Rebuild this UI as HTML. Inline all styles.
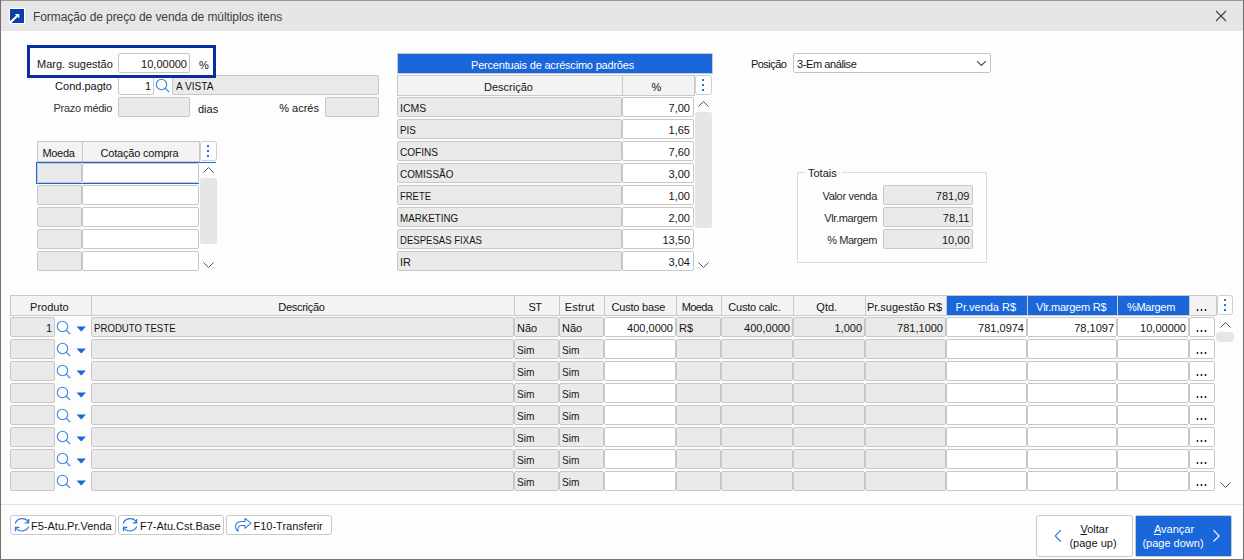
<!DOCTYPE html><html><head><meta charset="utf-8"><style>
html,body{margin:0;padding:0;}
body{width:1244px;height:560px;overflow:hidden;position:relative;background:#fdfdfd;font-family:"Liberation Sans", sans-serif;}
body div, body svg{position:absolute;box-sizing:border-box;white-space:pre;}
</style></head><body>
<div style="left:0px;top:0px;width:1244px;height:560px;background:#fdfdfd;"></div>
<div style="left:0px;top:0px;width:1244px;height:31px;background:#e6e6e6;"></div>
<div style="left:0px;top:0px;width:1244px;height:1px;background:#9a9a9a;"></div>
<div style="left:0px;top:0px;width:1px;height:560px;background:#6f6f6f;"></div>
<div style="left:1243px;top:0px;width:1px;height:560px;background:#6f6f6f;"></div>
<div style="left:0px;top:559px;width:1244px;height:1px;background:#7a7a7a;"></div>
<div style="left:9px;top:8px;width:16px;height:16px;background:#ffffff;"></div>
<div style="left:10px;top:9px;width:14px;height:14px;background:#0a3ea8;"></div>
<svg style="left:10px;top:9px" width="14" height="14" viewBox="0 0 14 14"><path d="M0 13.8 L7.6 6.4" stroke="#fff" stroke-width="2.1" fill="none"/><path d="M4.8 5 L9.3 5 L9.3 9.5 Z" fill="#fff"/></svg>
<div style="left:33px;top:10.7px;font-size:12px;line-height:12px;color:#404040;letter-spacing:-0.08px;">Formação de preço de venda de múltiplos itens</div>
<svg style="left:1215px;top:10px" width="12" height="12" viewBox="0 0 12 12"><path d="M1 1 L11 11 M11 1 L1 11" stroke="#404040" stroke-width="1.1" fill="none"/></svg>
<div style="left:37px;top:59.0px;font-size:11px;line-height:11px;color:#141414;">Marg. sugestão</div>
<div style="left:118px;top:53px;width:72px;height:20px;background:#ffffff;border:1px solid #c7c7c7;border-radius:2px;"></div>
<div style="left:-213px;width:400px;text-align:right;top:59.0px;font-size:11px;line-height:11px;color:#141414;">10,00000</div>
<div style="left:199px;top:60.0px;font-size:11px;line-height:11px;color:#141414;">%</div>
<div style="left:-288px;width:400px;text-align:right;top:81.0px;font-size:11px;line-height:11px;color:#141414;">Cond.pagto</div>
<div style="left:118px;top:75px;width:36px;height:20px;background:#ffffff;border:1px solid #c7c7c7;border-radius:2px;"></div>
<div style="left:-249px;width:400px;text-align:right;top:81.0px;font-size:11px;line-height:11px;color:#141414;">1</div>
<svg style="left:155px;top:78px" width="16" height="16" viewBox="0 0 16 16"><circle cx="6.5" cy="6.5" r="5.2" stroke="#3b82e6" stroke-width="1.1" fill="none"/><path d="M10.2 10.2 L14.2 14.2" stroke="#3b82e6" stroke-width="1.2"/></svg>
<div style="left:172px;top:75px;width:207px;height:20px;background:#eaeaea;border:1px solid #c7c7c7;border-radius:2px;"></div>
<div style="left:176px;top:81.0px;font-size:11px;line-height:11px;color:#141414;transform:scaleX(0.92);transform-origin:0 0;">A VISTA</div>
<div style="left:27px;top:45px;width:189px;height:33px;background:transparent;border:3px solid #0a2f9c;"></div>
<div style="left:-288px;width:400px;text-align:right;top:103.0px;font-size:11px;line-height:11px;color:#333;letter-spacing:-0.3px;">Prazo médio</div>
<div style="left:118px;top:97px;width:72px;height:20px;background:#eaeaea;border:1px solid #c7c7c7;border-radius:2px;"></div>
<div style="left:198px;top:104.0px;font-size:11px;line-height:11px;color:#141414;">dias</div>
<div style="left:-81px;width:400px;text-align:right;top:103.0px;font-size:11px;line-height:11px;color:#141414;">% acrés</div>
<div style="left:325px;top:97px;width:54px;height:20px;background:#eaeaea;border:1px solid #c7c7c7;border-radius:2px;"></div>
<div style="left:37px;top:141px;width:163px;height:21px;background:#f3f3f3;border:1px solid #c9c9c9;"></div>
<div style="left:82px;top:141px;width:1px;height:21px;background:#c9c9c9;"></div>
<div style="left:-141.5px;width:400px;text-align:center;top:148.0px;font-size:11px;line-height:11px;color:#141414;letter-spacing:-0.3px;">Moeda</div>
<div style="left:-60.5px;width:400px;text-align:center;top:148.0px;font-size:11px;line-height:11px;color:#141414;letter-spacing:-0.2px;">Cotação compra</div>
<div style="left:200px;top:141px;width:17px;height:20px;background:#ffffff;border:1px solid #cfcfcf;border-radius:3px;"></div>
<svg style="left:200px;top:141px" width="17" height="20" viewBox="0 0 17 20"><rect x="7" y="4" width="2" height="2" fill="#2a72e0"/><rect x="7" y="9" width="2" height="2" fill="#2a72e0"/><rect x="7" y="14" width="2" height="2" fill="#2a72e0"/></svg>
<div style="left:37px;top:163px;width:45px;height:20px;background:#eaeaea;border:1px solid #c7c7c7;border-radius:2px;"></div>
<div style="left:82px;top:163px;width:117px;height:20px;background:#ffffff;border:1px solid #c7c7c7;border-radius:2px;"></div>
<div style="left:37px;top:185px;width:45px;height:20px;background:#eaeaea;border:1px solid #c7c7c7;border-radius:2px;"></div>
<div style="left:82px;top:185px;width:117px;height:20px;background:#ffffff;border:1px solid #c7c7c7;border-radius:2px;"></div>
<div style="left:37px;top:207px;width:45px;height:20px;background:#eaeaea;border:1px solid #c7c7c7;border-radius:2px;"></div>
<div style="left:82px;top:207px;width:117px;height:20px;background:#ffffff;border:1px solid #c7c7c7;border-radius:2px;"></div>
<div style="left:37px;top:229px;width:45px;height:20px;background:#eaeaea;border:1px solid #c7c7c7;border-radius:2px;"></div>
<div style="left:82px;top:229px;width:117px;height:20px;background:#ffffff;border:1px solid #c7c7c7;border-radius:2px;"></div>
<div style="left:37px;top:251px;width:45px;height:20px;background:#eaeaea;border:1px solid #c7c7c7;border-radius:2px;"></div>
<div style="left:82px;top:251px;width:117px;height:20px;background:#ffffff;border:1px solid #c7c7c7;border-radius:2px;"></div>
<div style="left:36px;top:162px;width:163px;height:22px;background:transparent;border:1px solid #1a66e6;border-right:none;"></div>
<div style="left:199px;top:162px;width:17px;height:1px;background:#1a66e6;"></div>
<svg style="left:200px;top:164px" width="17" height="12" viewBox="0 0 17 12"><path d="M3.5 8.5 L8.5 3.5 L13.5 8.5" stroke="#555" stroke-width="1" fill="none"/></svg>
<div style="left:200px;top:178px;width:17px;height:66px;background:#e6e6e6;border-radius:3px;"></div>
<svg style="left:200px;top:259px" width="17" height="12" viewBox="0 0 17 12"><path d="M3.5 3.5 L8.5 8.5 L13.5 3.5" stroke="#555" stroke-width="1" fill="none"/></svg>
<div style="left:397px;top:53px;width:316px;height:21px;background:#1a66db;border:1px solid #c5cbd3;"></div>
<div style="left:352.5px;width:400px;text-align:center;top:60.0px;font-size:11px;line-height:11px;color:#ffffff;letter-spacing:-0.2px;">Percentuais de acréscimo padrões</div>
<div style="left:397px;top:75px;width:298px;height:21px;background:#f3f3f3;border:1px solid #c9c9c9;"></div>
<div style="left:622px;top:75px;width:1px;height:21px;background:#c9c9c9;"></div>
<div style="left:308.5px;width:400px;text-align:center;top:82.0px;font-size:11px;line-height:11px;color:#141414;">Descrição</div>
<div style="left:456.5px;width:400px;text-align:center;top:82.0px;font-size:11px;line-height:11px;color:#141414;">%</div>
<div style="left:695px;top:75px;width:17px;height:20px;background:#ffffff;border:1px solid #cfcfcf;border-radius:3px;"></div>
<svg style="left:695px;top:75px" width="17" height="20" viewBox="0 0 17 20"><rect x="7" y="4" width="2" height="2" fill="#2a72e0"/><rect x="7" y="9" width="2" height="2" fill="#2a72e0"/><rect x="7" y="14" width="2" height="2" fill="#2a72e0"/></svg>
<div style="left:397px;top:97px;width:225px;height:20px;background:#eaeaea;border:1px solid #c7c7c7;border-radius:2px;"></div>
<div style="left:622px;top:97px;width:72px;height:20px;background:#ffffff;border:1px solid #c7c7c7;border-radius:2px;"></div>
<div style="left:400px;top:103.0px;font-size:11px;line-height:11px;color:#141414;transform:scaleX(0.95);transform-origin:0 0;">ICMS</div>
<div style="left:290px;width:400px;text-align:right;top:103.0px;font-size:11px;line-height:11px;color:#141414;">7,00</div>
<div style="left:397px;top:119px;width:225px;height:20px;background:#eaeaea;border:1px solid #c7c7c7;border-radius:2px;"></div>
<div style="left:622px;top:119px;width:72px;height:20px;background:#ffffff;border:1px solid #c7c7c7;border-radius:2px;"></div>
<div style="left:400px;top:125.0px;font-size:11px;line-height:11px;color:#141414;transform:scaleX(0.89);transform-origin:0 0;">PIS</div>
<div style="left:290px;width:400px;text-align:right;top:125.0px;font-size:11px;line-height:11px;color:#141414;">1,65</div>
<div style="left:397px;top:141px;width:225px;height:20px;background:#eaeaea;border:1px solid #c7c7c7;border-radius:2px;"></div>
<div style="left:622px;top:141px;width:72px;height:20px;background:#ffffff;border:1px solid #c7c7c7;border-radius:2px;"></div>
<div style="left:400px;top:147.0px;font-size:11px;line-height:11px;color:#141414;transform:scaleX(0.915);transform-origin:0 0;">COFINS</div>
<div style="left:290px;width:400px;text-align:right;top:147.0px;font-size:11px;line-height:11px;color:#141414;">7,60</div>
<div style="left:397px;top:163px;width:225px;height:20px;background:#eaeaea;border:1px solid #c7c7c7;border-radius:2px;"></div>
<div style="left:622px;top:163px;width:72px;height:20px;background:#ffffff;border:1px solid #c7c7c7;border-radius:2px;"></div>
<div style="left:400px;top:169.0px;font-size:11px;line-height:11px;color:#141414;transform:scaleX(0.9);transform-origin:0 0;">COMISSÃO</div>
<div style="left:290px;width:400px;text-align:right;top:169.0px;font-size:11px;line-height:11px;color:#141414;">3,00</div>
<div style="left:397px;top:185px;width:225px;height:20px;background:#eaeaea;border:1px solid #c7c7c7;border-radius:2px;"></div>
<div style="left:622px;top:185px;width:72px;height:20px;background:#ffffff;border:1px solid #c7c7c7;border-radius:2px;"></div>
<div style="left:400px;top:191.0px;font-size:11px;line-height:11px;color:#141414;transform:scaleX(0.86);transform-origin:0 0;">FRETE</div>
<div style="left:290px;width:400px;text-align:right;top:191.0px;font-size:11px;line-height:11px;color:#141414;">1,00</div>
<div style="left:397px;top:207px;width:225px;height:20px;background:#eaeaea;border:1px solid #c7c7c7;border-radius:2px;"></div>
<div style="left:622px;top:207px;width:72px;height:20px;background:#ffffff;border:1px solid #c7c7c7;border-radius:2px;"></div>
<div style="left:400px;top:213.0px;font-size:11px;line-height:11px;color:#141414;transform:scaleX(0.89);transform-origin:0 0;">MARKETING</div>
<div style="left:290px;width:400px;text-align:right;top:213.0px;font-size:11px;line-height:11px;color:#141414;">2,00</div>
<div style="left:397px;top:229px;width:225px;height:20px;background:#eaeaea;border:1px solid #c7c7c7;border-radius:2px;"></div>
<div style="left:622px;top:229px;width:72px;height:20px;background:#ffffff;border:1px solid #c7c7c7;border-radius:2px;"></div>
<div style="left:400px;top:235.0px;font-size:11px;line-height:11px;color:#141414;transform:scaleX(0.87);transform-origin:0 0;">DESPESAS FIXAS</div>
<div style="left:290px;width:400px;text-align:right;top:235.0px;font-size:11px;line-height:11px;color:#141414;">13,50</div>
<div style="left:397px;top:251px;width:225px;height:20px;background:#eaeaea;border:1px solid #c7c7c7;border-radius:2px;"></div>
<div style="left:622px;top:251px;width:72px;height:20px;background:#ffffff;border:1px solid #c7c7c7;border-radius:2px;"></div>
<div style="left:400px;top:257.0px;font-size:11px;line-height:11px;color:#141414;transform:scaleX(1);transform-origin:0 0;">IR</div>
<div style="left:290px;width:400px;text-align:right;top:257.0px;font-size:11px;line-height:11px;color:#141414;">3,04</div>
<svg style="left:695px;top:98px" width="17" height="12" viewBox="0 0 17 12"><path d="M3.5 8.5 L8.5 3.5 L13.5 8.5" stroke="#555" stroke-width="1" fill="none"/></svg>
<div style="left:695px;top:112px;width:17px;height:116px;background:#e6e6e6;border-radius:3px;"></div>
<svg style="left:695px;top:259px" width="17" height="12" viewBox="0 0 17 12"><path d="M3.5 3.5 L8.5 8.5 L13.5 3.5" stroke="#555" stroke-width="1" fill="none"/></svg>
<div style="left:751px;top:59.0px;font-size:11px;line-height:11px;color:#141414;letter-spacing:-0.55px;">Posição</div>
<div style="left:793px;top:53px;width:198px;height:20px;background:#ffffff;border:1px solid #c4c4c4;border-radius:2px;"></div>
<div style="left:797px;top:59.0px;font-size:11px;line-height:11px;color:#141414;letter-spacing:-0.4px;">3-Em análise</div>
<svg style="left:970px;top:55px" width="20" height="15" viewBox="0 0 20 15"><path d="M7 6.1 L11.4 10.5 L15.8 6.1" stroke="#444" stroke-width="1.1" fill="none"/></svg>
<div style="left:797px;top:172px;width:190px;height:91px;background:transparent;border:1px solid #dcdcdc;"></div>
<div style="left:805px;top:166px;width:37px;height:12px;background:#fdfdfd;"></div>
<div style="left:808px;top:168.0px;font-size:11px;line-height:11px;color:#141414;">Totais</div>
<div style="left:477px;width:400px;text-align:right;top:191.0px;font-size:11px;line-height:11px;color:#2a2a2a;letter-spacing:-0.3px;">Valor venda</div>
<div style="left:883px;top:185px;width:90px;height:20px;background:#eaeaea;border:1px solid #c7c7c7;border-radius:2px;"></div>
<div style="left:569.5px;width:400px;text-align:right;top:191.0px;font-size:11px;line-height:11px;color:#141414;">781,09</div>
<div style="left:477px;width:400px;text-align:right;top:213.0px;font-size:11px;line-height:11px;color:#2a2a2a;letter-spacing:-0.35px;">Vlr.margem</div>
<div style="left:883px;top:207px;width:90px;height:20px;background:#eaeaea;border:1px solid #c7c7c7;border-radius:2px;"></div>
<div style="left:569.5px;width:400px;text-align:right;top:213.0px;font-size:11px;line-height:11px;color:#141414;">78,11</div>
<div style="left:477px;width:400px;text-align:right;top:235.0px;font-size:11px;line-height:11px;color:#2a2a2a;letter-spacing:-0.42px;">% Margem</div>
<div style="left:883px;top:229px;width:90px;height:20px;background:#eaeaea;border:1px solid #c7c7c7;border-radius:2px;"></div>
<div style="left:569.5px;width:400px;text-align:right;top:235.0px;font-size:11px;line-height:11px;color:#141414;">10,00</div>
<div style="left:10px;top:295px;width:1207px;height:21px;background:#f3f3f3;border:1px solid #c9c9c9;"></div>
<div style="left:947px;top:296px;width:242px;height:19px;background:#1a66db;"></div>
<div style="left:91px;top:295px;width:1px;height:21px;background:#c9c9c9;"></div>
<div style="left:514px;top:295px;width:1px;height:21px;background:#c9c9c9;"></div>
<div style="left:559px;top:295px;width:1px;height:21px;background:#c9c9c9;"></div>
<div style="left:604px;top:295px;width:1px;height:21px;background:#c9c9c9;"></div>
<div style="left:676px;top:295px;width:1px;height:21px;background:#c9c9c9;"></div>
<div style="left:721px;top:295px;width:1px;height:21px;background:#c9c9c9;"></div>
<div style="left:793px;top:295px;width:1px;height:21px;background:#c9c9c9;"></div>
<div style="left:865px;top:295px;width:1px;height:21px;background:#c9c9c9;"></div>
<div style="left:946px;top:295px;width:1px;height:21px;background:#c9c9c9;"></div>
<div style="left:1027px;top:295px;width:1px;height:21px;background:#cfcbc5;"></div>
<div style="left:1117px;top:295px;width:1px;height:21px;background:#cfcbc5;"></div>
<div style="left:1189px;top:295px;width:1px;height:21px;background:#c9c9c9;"></div>
<div style="left:-150.7px;width:400px;text-align:center;top:302.0px;font-size:11px;line-height:11px;color:#141414;">Produto</div>
<div style="left:101.44999999999999px;width:400px;text-align:center;top:302.0px;font-size:11px;line-height:11px;color:#141414;letter-spacing:-0.3px;">Descrição</div>
<div style="left:335px;width:400px;text-align:center;top:302.0px;font-size:11px;line-height:11px;color:#141414;letter-spacing:-0.5px;">ST</div>
<div style="left:379.6px;width:400px;text-align:center;top:302.0px;font-size:11px;line-height:11px;color:#141414;letter-spacing:0.15px;">Estrut</div>
<div style="left:438.35px;width:400px;text-align:center;top:302.0px;font-size:11px;line-height:11px;color:#141414;letter-spacing:-0.2px;">Custo base</div>
<div style="left:497.1px;width:400px;text-align:center;top:302.0px;font-size:11px;line-height:11px;color:#141414;letter-spacing:-0.6px;">Moeda</div>
<div style="left:554.4px;width:400px;text-align:center;top:302.0px;font-size:11px;line-height:11px;color:#141414;letter-spacing:-0.2px;">Custo calc.</div>
<div style="left:626.75px;width:400px;text-align:center;top:302.0px;font-size:11px;line-height:11px;color:#141414;">Qtd.</div>
<div style="left:704.5px;width:400px;text-align:center;top:302.0px;font-size:11px;line-height:11px;color:#141414;">Pr.sugestão R$</div>
<div style="left:785.85px;width:400px;text-align:center;top:302.0px;font-size:11px;line-height:11px;color:#ffffff;">Pr.venda R$</div>
<div style="left:871.2px;width:400px;text-align:center;top:302.0px;font-size:11px;line-height:11px;color:#ffffff;letter-spacing:-0.24px;">Vlr.margem R$</div>
<div style="left:951px;width:400px;text-align:center;top:302.0px;font-size:11px;line-height:11px;color:#ffffff;letter-spacing:-0.29px;">%Margem</div>
<div style="left:1196px;top:309px;width:3px;height:2px;background:#c4c4c4;"></div>
<div style="left:1197px;top:309px;width:1px;height:2px;background:#1a1a3a;"></div>
<div style="left:1200px;top:309px;width:3px;height:2px;background:#c4c4c4;"></div>
<div style="left:1201px;top:309px;width:1px;height:2px;background:#1a1a3a;"></div>
<div style="left:1204px;top:309px;width:3px;height:2px;background:#c4c4c4;"></div>
<div style="left:1205px;top:309px;width:1px;height:2px;background:#1a1a3a;"></div>
<div style="left:1217px;top:295px;width:16px;height:20px;background:#ffffff;border:1px solid #cfcfcf;border-radius:3px;"></div>
<svg style="left:1217px;top:295px" width="16" height="20" viewBox="0 0 16 20"><rect x="7" y="4" width="2" height="2" fill="#2a72e0"/><rect x="7" y="9" width="2" height="2" fill="#2a72e0"/><rect x="7" y="14" width="2" height="2" fill="#2a72e0"/></svg>
<div style="left:10px;top:317px;width:45px;height:20px;background:#eaeaea;border:1px solid #c7c7c7;border-radius:2px;"></div>
<svg style="left:56px;top:320px" width="16" height="16" viewBox="0 0 16 16"><circle cx="6.5" cy="6.5" r="5.2" stroke="#3b82e6" stroke-width="1.1" fill="none"/><path d="M10.2 10.2 L14.2 14.2" stroke="#3b82e6" stroke-width="1.2"/></svg>
<svg style="left:76px;top:326px" width="11" height="6" viewBox="0 0 11 6"><path d="M0.5 0.5 H10 L5.25 5.5 Z" fill="#1a66db"/></svg>
<div style="left:91px;top:317px;width:423px;height:20px;background:#eaeaea;border:1px solid #c7c7c7;border-radius:2px;"></div>
<div style="left:514px;top:317px;width:45px;height:20px;background:#eaeaea;border:1px solid #c7c7c7;border-radius:2px;"></div>
<div style="left:559px;top:317px;width:45px;height:20px;background:#eaeaea;border:1px solid #c7c7c7;border-radius:2px;"></div>
<div style="left:604px;top:317px;width:72px;height:20px;background:#ffffff;border:1px solid #c7c7c7;border-radius:2px;"></div>
<div style="left:676px;top:317px;width:45px;height:20px;background:#eaeaea;border:1px solid #c7c7c7;border-radius:2px;"></div>
<div style="left:721px;top:317px;width:72px;height:20px;background:#eaeaea;border:1px solid #c7c7c7;border-radius:2px;"></div>
<div style="left:793px;top:317px;width:72px;height:20px;background:#eaeaea;border:1px solid #c7c7c7;border-radius:2px;"></div>
<div style="left:865px;top:317px;width:81px;height:20px;background:#eaeaea;border:1px solid #c7c7c7;border-radius:2px;"></div>
<div style="left:946px;top:317px;width:81px;height:20px;background:#ffffff;border:1px solid #c7c7c7;border-radius:2px;"></div>
<div style="left:1027px;top:317px;width:90px;height:20px;background:#ffffff;border:1px solid #c7c7c7;border-radius:2px;"></div>
<div style="left:1117px;top:317px;width:72px;height:20px;background:#ffffff;border:1px solid #c7c7c7;border-radius:2px;"></div>
<div style="left:1189px;top:317px;width:26px;height:20px;background:#ffffff;border:1px solid #c7c7c7;border-radius:2px;"></div>
<div style="left:517px;top:323.0px;font-size:11px;line-height:11px;color:#141414;">Não</div>
<div style="left:562px;top:323.0px;font-size:11px;line-height:11px;color:#141414;">Não</div>
<div style="left:1196px;top:330px;width:3px;height:2px;background:#c4c4c4;"></div>
<div style="left:1197px;top:330px;width:1px;height:2px;background:#1a1a3a;"></div>
<div style="left:1200px;top:330px;width:3px;height:2px;background:#c4c4c4;"></div>
<div style="left:1201px;top:330px;width:1px;height:2px;background:#1a1a3a;"></div>
<div style="left:1204px;top:330px;width:3px;height:2px;background:#c4c4c4;"></div>
<div style="left:1205px;top:330px;width:1px;height:2px;background:#1a1a3a;"></div>
<div style="left:-348px;width:400px;text-align:right;top:323.0px;font-size:11px;line-height:11px;color:#141414;">1</div>
<div style="left:94px;top:323.0px;font-size:11px;line-height:11px;color:#141414;transform:scaleX(0.876);transform-origin:0 0;">PRODUTO TESTE</div>
<div style="left:273px;width:400px;text-align:right;top:323.0px;font-size:11px;line-height:11px;color:#141414;">400,0000</div>
<div style="left:679px;top:323.0px;font-size:11px;line-height:11px;color:#141414;">R$</div>
<div style="left:390px;width:400px;text-align:right;top:323.0px;font-size:11px;line-height:11px;color:#141414;">400,0000</div>
<div style="left:462px;width:400px;text-align:right;top:323.0px;font-size:11px;line-height:11px;color:#141414;">1,000</div>
<div style="left:543px;width:400px;text-align:right;top:323.0px;font-size:11px;line-height:11px;color:#141414;">781,1000</div>
<div style="left:624px;width:400px;text-align:right;top:323.0px;font-size:11px;line-height:11px;color:#141414;">781,0974</div>
<div style="left:714px;width:400px;text-align:right;top:323.0px;font-size:11px;line-height:11px;color:#141414;">78,1097</div>
<div style="left:786px;width:400px;text-align:right;top:323.0px;font-size:11px;line-height:11px;color:#141414;">10,00000</div>
<div style="left:10px;top:339px;width:45px;height:20px;background:#eaeaea;border:1px solid #c7c7c7;border-radius:2px;"></div>
<svg style="left:56px;top:342px" width="16" height="16" viewBox="0 0 16 16"><circle cx="6.5" cy="6.5" r="5.2" stroke="#3b82e6" stroke-width="1.1" fill="none"/><path d="M10.2 10.2 L14.2 14.2" stroke="#3b82e6" stroke-width="1.2"/></svg>
<svg style="left:76px;top:348px" width="11" height="6" viewBox="0 0 11 6"><path d="M0.5 0.5 H10 L5.25 5.5 Z" fill="#1a66db"/></svg>
<div style="left:91px;top:339px;width:423px;height:20px;background:#eaeaea;border:1px solid #c7c7c7;border-radius:2px;"></div>
<div style="left:514px;top:339px;width:45px;height:20px;background:#eaeaea;border:1px solid #c7c7c7;border-radius:2px;"></div>
<div style="left:559px;top:339px;width:45px;height:20px;background:#eaeaea;border:1px solid #c7c7c7;border-radius:2px;"></div>
<div style="left:604px;top:339px;width:72px;height:20px;background:#ffffff;border:1px solid #c7c7c7;border-radius:2px;"></div>
<div style="left:676px;top:339px;width:45px;height:20px;background:#eaeaea;border:1px solid #c7c7c7;border-radius:2px;"></div>
<div style="left:721px;top:339px;width:72px;height:20px;background:#eaeaea;border:1px solid #c7c7c7;border-radius:2px;"></div>
<div style="left:793px;top:339px;width:72px;height:20px;background:#eaeaea;border:1px solid #c7c7c7;border-radius:2px;"></div>
<div style="left:865px;top:339px;width:81px;height:20px;background:#eaeaea;border:1px solid #c7c7c7;border-radius:2px;"></div>
<div style="left:946px;top:339px;width:81px;height:20px;background:#ffffff;border:1px solid #c7c7c7;border-radius:2px;"></div>
<div style="left:1027px;top:339px;width:90px;height:20px;background:#ffffff;border:1px solid #c7c7c7;border-radius:2px;"></div>
<div style="left:1117px;top:339px;width:72px;height:20px;background:#ffffff;border:1px solid #c7c7c7;border-radius:2px;"></div>
<div style="left:1189px;top:339px;width:26px;height:20px;background:#ffffff;border:1px solid #c7c7c7;border-radius:2px;"></div>
<div style="left:517px;top:345.0px;font-size:11px;line-height:11px;color:#141414;transform:scaleX(0.92);transform-origin:0 0;">Sim</div>
<div style="left:562px;top:345.0px;font-size:11px;line-height:11px;color:#141414;transform:scaleX(0.92);transform-origin:0 0;">Sim</div>
<div style="left:1196px;top:352px;width:3px;height:2px;background:#c4c4c4;"></div>
<div style="left:1197px;top:352px;width:1px;height:2px;background:#1a1a3a;"></div>
<div style="left:1200px;top:352px;width:3px;height:2px;background:#c4c4c4;"></div>
<div style="left:1201px;top:352px;width:1px;height:2px;background:#1a1a3a;"></div>
<div style="left:1204px;top:352px;width:3px;height:2px;background:#c4c4c4;"></div>
<div style="left:1205px;top:352px;width:1px;height:2px;background:#1a1a3a;"></div>
<div style="left:10px;top:361px;width:45px;height:20px;background:#eaeaea;border:1px solid #c7c7c7;border-radius:2px;"></div>
<svg style="left:56px;top:364px" width="16" height="16" viewBox="0 0 16 16"><circle cx="6.5" cy="6.5" r="5.2" stroke="#3b82e6" stroke-width="1.1" fill="none"/><path d="M10.2 10.2 L14.2 14.2" stroke="#3b82e6" stroke-width="1.2"/></svg>
<svg style="left:76px;top:370px" width="11" height="6" viewBox="0 0 11 6"><path d="M0.5 0.5 H10 L5.25 5.5 Z" fill="#1a66db"/></svg>
<div style="left:91px;top:361px;width:423px;height:20px;background:#eaeaea;border:1px solid #c7c7c7;border-radius:2px;"></div>
<div style="left:514px;top:361px;width:45px;height:20px;background:#eaeaea;border:1px solid #c7c7c7;border-radius:2px;"></div>
<div style="left:559px;top:361px;width:45px;height:20px;background:#eaeaea;border:1px solid #c7c7c7;border-radius:2px;"></div>
<div style="left:604px;top:361px;width:72px;height:20px;background:#ffffff;border:1px solid #c7c7c7;border-radius:2px;"></div>
<div style="left:676px;top:361px;width:45px;height:20px;background:#eaeaea;border:1px solid #c7c7c7;border-radius:2px;"></div>
<div style="left:721px;top:361px;width:72px;height:20px;background:#eaeaea;border:1px solid #c7c7c7;border-radius:2px;"></div>
<div style="left:793px;top:361px;width:72px;height:20px;background:#eaeaea;border:1px solid #c7c7c7;border-radius:2px;"></div>
<div style="left:865px;top:361px;width:81px;height:20px;background:#eaeaea;border:1px solid #c7c7c7;border-radius:2px;"></div>
<div style="left:946px;top:361px;width:81px;height:20px;background:#ffffff;border:1px solid #c7c7c7;border-radius:2px;"></div>
<div style="left:1027px;top:361px;width:90px;height:20px;background:#ffffff;border:1px solid #c7c7c7;border-radius:2px;"></div>
<div style="left:1117px;top:361px;width:72px;height:20px;background:#ffffff;border:1px solid #c7c7c7;border-radius:2px;"></div>
<div style="left:1189px;top:361px;width:26px;height:20px;background:#ffffff;border:1px solid #c7c7c7;border-radius:2px;"></div>
<div style="left:517px;top:367.0px;font-size:11px;line-height:11px;color:#141414;transform:scaleX(0.92);transform-origin:0 0;">Sim</div>
<div style="left:562px;top:367.0px;font-size:11px;line-height:11px;color:#141414;transform:scaleX(0.92);transform-origin:0 0;">Sim</div>
<div style="left:1196px;top:374px;width:3px;height:2px;background:#c4c4c4;"></div>
<div style="left:1197px;top:374px;width:1px;height:2px;background:#1a1a3a;"></div>
<div style="left:1200px;top:374px;width:3px;height:2px;background:#c4c4c4;"></div>
<div style="left:1201px;top:374px;width:1px;height:2px;background:#1a1a3a;"></div>
<div style="left:1204px;top:374px;width:3px;height:2px;background:#c4c4c4;"></div>
<div style="left:1205px;top:374px;width:1px;height:2px;background:#1a1a3a;"></div>
<div style="left:10px;top:383px;width:45px;height:20px;background:#eaeaea;border:1px solid #c7c7c7;border-radius:2px;"></div>
<svg style="left:56px;top:386px" width="16" height="16" viewBox="0 0 16 16"><circle cx="6.5" cy="6.5" r="5.2" stroke="#3b82e6" stroke-width="1.1" fill="none"/><path d="M10.2 10.2 L14.2 14.2" stroke="#3b82e6" stroke-width="1.2"/></svg>
<svg style="left:76px;top:392px" width="11" height="6" viewBox="0 0 11 6"><path d="M0.5 0.5 H10 L5.25 5.5 Z" fill="#1a66db"/></svg>
<div style="left:91px;top:383px;width:423px;height:20px;background:#eaeaea;border:1px solid #c7c7c7;border-radius:2px;"></div>
<div style="left:514px;top:383px;width:45px;height:20px;background:#eaeaea;border:1px solid #c7c7c7;border-radius:2px;"></div>
<div style="left:559px;top:383px;width:45px;height:20px;background:#eaeaea;border:1px solid #c7c7c7;border-radius:2px;"></div>
<div style="left:604px;top:383px;width:72px;height:20px;background:#ffffff;border:1px solid #c7c7c7;border-radius:2px;"></div>
<div style="left:676px;top:383px;width:45px;height:20px;background:#eaeaea;border:1px solid #c7c7c7;border-radius:2px;"></div>
<div style="left:721px;top:383px;width:72px;height:20px;background:#eaeaea;border:1px solid #c7c7c7;border-radius:2px;"></div>
<div style="left:793px;top:383px;width:72px;height:20px;background:#eaeaea;border:1px solid #c7c7c7;border-radius:2px;"></div>
<div style="left:865px;top:383px;width:81px;height:20px;background:#eaeaea;border:1px solid #c7c7c7;border-radius:2px;"></div>
<div style="left:946px;top:383px;width:81px;height:20px;background:#ffffff;border:1px solid #c7c7c7;border-radius:2px;"></div>
<div style="left:1027px;top:383px;width:90px;height:20px;background:#ffffff;border:1px solid #c7c7c7;border-radius:2px;"></div>
<div style="left:1117px;top:383px;width:72px;height:20px;background:#ffffff;border:1px solid #c7c7c7;border-radius:2px;"></div>
<div style="left:1189px;top:383px;width:26px;height:20px;background:#ffffff;border:1px solid #c7c7c7;border-radius:2px;"></div>
<div style="left:517px;top:389.0px;font-size:11px;line-height:11px;color:#141414;transform:scaleX(0.92);transform-origin:0 0;">Sim</div>
<div style="left:562px;top:389.0px;font-size:11px;line-height:11px;color:#141414;transform:scaleX(0.92);transform-origin:0 0;">Sim</div>
<div style="left:1196px;top:396px;width:3px;height:2px;background:#c4c4c4;"></div>
<div style="left:1197px;top:396px;width:1px;height:2px;background:#1a1a3a;"></div>
<div style="left:1200px;top:396px;width:3px;height:2px;background:#c4c4c4;"></div>
<div style="left:1201px;top:396px;width:1px;height:2px;background:#1a1a3a;"></div>
<div style="left:1204px;top:396px;width:3px;height:2px;background:#c4c4c4;"></div>
<div style="left:1205px;top:396px;width:1px;height:2px;background:#1a1a3a;"></div>
<div style="left:10px;top:405px;width:45px;height:20px;background:#eaeaea;border:1px solid #c7c7c7;border-radius:2px;"></div>
<svg style="left:56px;top:408px" width="16" height="16" viewBox="0 0 16 16"><circle cx="6.5" cy="6.5" r="5.2" stroke="#3b82e6" stroke-width="1.1" fill="none"/><path d="M10.2 10.2 L14.2 14.2" stroke="#3b82e6" stroke-width="1.2"/></svg>
<svg style="left:76px;top:414px" width="11" height="6" viewBox="0 0 11 6"><path d="M0.5 0.5 H10 L5.25 5.5 Z" fill="#1a66db"/></svg>
<div style="left:91px;top:405px;width:423px;height:20px;background:#eaeaea;border:1px solid #c7c7c7;border-radius:2px;"></div>
<div style="left:514px;top:405px;width:45px;height:20px;background:#eaeaea;border:1px solid #c7c7c7;border-radius:2px;"></div>
<div style="left:559px;top:405px;width:45px;height:20px;background:#eaeaea;border:1px solid #c7c7c7;border-radius:2px;"></div>
<div style="left:604px;top:405px;width:72px;height:20px;background:#ffffff;border:1px solid #c7c7c7;border-radius:2px;"></div>
<div style="left:676px;top:405px;width:45px;height:20px;background:#eaeaea;border:1px solid #c7c7c7;border-radius:2px;"></div>
<div style="left:721px;top:405px;width:72px;height:20px;background:#eaeaea;border:1px solid #c7c7c7;border-radius:2px;"></div>
<div style="left:793px;top:405px;width:72px;height:20px;background:#eaeaea;border:1px solid #c7c7c7;border-radius:2px;"></div>
<div style="left:865px;top:405px;width:81px;height:20px;background:#eaeaea;border:1px solid #c7c7c7;border-radius:2px;"></div>
<div style="left:946px;top:405px;width:81px;height:20px;background:#ffffff;border:1px solid #c7c7c7;border-radius:2px;"></div>
<div style="left:1027px;top:405px;width:90px;height:20px;background:#ffffff;border:1px solid #c7c7c7;border-radius:2px;"></div>
<div style="left:1117px;top:405px;width:72px;height:20px;background:#ffffff;border:1px solid #c7c7c7;border-radius:2px;"></div>
<div style="left:1189px;top:405px;width:26px;height:20px;background:#ffffff;border:1px solid #c7c7c7;border-radius:2px;"></div>
<div style="left:517px;top:411.0px;font-size:11px;line-height:11px;color:#141414;transform:scaleX(0.92);transform-origin:0 0;">Sim</div>
<div style="left:562px;top:411.0px;font-size:11px;line-height:11px;color:#141414;transform:scaleX(0.92);transform-origin:0 0;">Sim</div>
<div style="left:1196px;top:418px;width:3px;height:2px;background:#c4c4c4;"></div>
<div style="left:1197px;top:418px;width:1px;height:2px;background:#1a1a3a;"></div>
<div style="left:1200px;top:418px;width:3px;height:2px;background:#c4c4c4;"></div>
<div style="left:1201px;top:418px;width:1px;height:2px;background:#1a1a3a;"></div>
<div style="left:1204px;top:418px;width:3px;height:2px;background:#c4c4c4;"></div>
<div style="left:1205px;top:418px;width:1px;height:2px;background:#1a1a3a;"></div>
<div style="left:10px;top:427px;width:45px;height:20px;background:#eaeaea;border:1px solid #c7c7c7;border-radius:2px;"></div>
<svg style="left:56px;top:430px" width="16" height="16" viewBox="0 0 16 16"><circle cx="6.5" cy="6.5" r="5.2" stroke="#3b82e6" stroke-width="1.1" fill="none"/><path d="M10.2 10.2 L14.2 14.2" stroke="#3b82e6" stroke-width="1.2"/></svg>
<svg style="left:76px;top:436px" width="11" height="6" viewBox="0 0 11 6"><path d="M0.5 0.5 H10 L5.25 5.5 Z" fill="#1a66db"/></svg>
<div style="left:91px;top:427px;width:423px;height:20px;background:#eaeaea;border:1px solid #c7c7c7;border-radius:2px;"></div>
<div style="left:514px;top:427px;width:45px;height:20px;background:#eaeaea;border:1px solid #c7c7c7;border-radius:2px;"></div>
<div style="left:559px;top:427px;width:45px;height:20px;background:#eaeaea;border:1px solid #c7c7c7;border-radius:2px;"></div>
<div style="left:604px;top:427px;width:72px;height:20px;background:#ffffff;border:1px solid #c7c7c7;border-radius:2px;"></div>
<div style="left:676px;top:427px;width:45px;height:20px;background:#eaeaea;border:1px solid #c7c7c7;border-radius:2px;"></div>
<div style="left:721px;top:427px;width:72px;height:20px;background:#eaeaea;border:1px solid #c7c7c7;border-radius:2px;"></div>
<div style="left:793px;top:427px;width:72px;height:20px;background:#eaeaea;border:1px solid #c7c7c7;border-radius:2px;"></div>
<div style="left:865px;top:427px;width:81px;height:20px;background:#eaeaea;border:1px solid #c7c7c7;border-radius:2px;"></div>
<div style="left:946px;top:427px;width:81px;height:20px;background:#ffffff;border:1px solid #c7c7c7;border-radius:2px;"></div>
<div style="left:1027px;top:427px;width:90px;height:20px;background:#ffffff;border:1px solid #c7c7c7;border-radius:2px;"></div>
<div style="left:1117px;top:427px;width:72px;height:20px;background:#ffffff;border:1px solid #c7c7c7;border-radius:2px;"></div>
<div style="left:1189px;top:427px;width:26px;height:20px;background:#ffffff;border:1px solid #c7c7c7;border-radius:2px;"></div>
<div style="left:517px;top:433.0px;font-size:11px;line-height:11px;color:#141414;transform:scaleX(0.92);transform-origin:0 0;">Sim</div>
<div style="left:562px;top:433.0px;font-size:11px;line-height:11px;color:#141414;transform:scaleX(0.92);transform-origin:0 0;">Sim</div>
<div style="left:1196px;top:440px;width:3px;height:2px;background:#c4c4c4;"></div>
<div style="left:1197px;top:440px;width:1px;height:2px;background:#1a1a3a;"></div>
<div style="left:1200px;top:440px;width:3px;height:2px;background:#c4c4c4;"></div>
<div style="left:1201px;top:440px;width:1px;height:2px;background:#1a1a3a;"></div>
<div style="left:1204px;top:440px;width:3px;height:2px;background:#c4c4c4;"></div>
<div style="left:1205px;top:440px;width:1px;height:2px;background:#1a1a3a;"></div>
<div style="left:10px;top:449px;width:45px;height:20px;background:#eaeaea;border:1px solid #c7c7c7;border-radius:2px;"></div>
<svg style="left:56px;top:452px" width="16" height="16" viewBox="0 0 16 16"><circle cx="6.5" cy="6.5" r="5.2" stroke="#3b82e6" stroke-width="1.1" fill="none"/><path d="M10.2 10.2 L14.2 14.2" stroke="#3b82e6" stroke-width="1.2"/></svg>
<svg style="left:76px;top:458px" width="11" height="6" viewBox="0 0 11 6"><path d="M0.5 0.5 H10 L5.25 5.5 Z" fill="#1a66db"/></svg>
<div style="left:91px;top:449px;width:423px;height:20px;background:#eaeaea;border:1px solid #c7c7c7;border-radius:2px;"></div>
<div style="left:514px;top:449px;width:45px;height:20px;background:#eaeaea;border:1px solid #c7c7c7;border-radius:2px;"></div>
<div style="left:559px;top:449px;width:45px;height:20px;background:#eaeaea;border:1px solid #c7c7c7;border-radius:2px;"></div>
<div style="left:604px;top:449px;width:72px;height:20px;background:#ffffff;border:1px solid #c7c7c7;border-radius:2px;"></div>
<div style="left:676px;top:449px;width:45px;height:20px;background:#eaeaea;border:1px solid #c7c7c7;border-radius:2px;"></div>
<div style="left:721px;top:449px;width:72px;height:20px;background:#eaeaea;border:1px solid #c7c7c7;border-radius:2px;"></div>
<div style="left:793px;top:449px;width:72px;height:20px;background:#eaeaea;border:1px solid #c7c7c7;border-radius:2px;"></div>
<div style="left:865px;top:449px;width:81px;height:20px;background:#eaeaea;border:1px solid #c7c7c7;border-radius:2px;"></div>
<div style="left:946px;top:449px;width:81px;height:20px;background:#ffffff;border:1px solid #c7c7c7;border-radius:2px;"></div>
<div style="left:1027px;top:449px;width:90px;height:20px;background:#ffffff;border:1px solid #c7c7c7;border-radius:2px;"></div>
<div style="left:1117px;top:449px;width:72px;height:20px;background:#ffffff;border:1px solid #c7c7c7;border-radius:2px;"></div>
<div style="left:1189px;top:449px;width:26px;height:20px;background:#ffffff;border:1px solid #c7c7c7;border-radius:2px;"></div>
<div style="left:517px;top:455.0px;font-size:11px;line-height:11px;color:#141414;transform:scaleX(0.92);transform-origin:0 0;">Sim</div>
<div style="left:562px;top:455.0px;font-size:11px;line-height:11px;color:#141414;transform:scaleX(0.92);transform-origin:0 0;">Sim</div>
<div style="left:1196px;top:462px;width:3px;height:2px;background:#c4c4c4;"></div>
<div style="left:1197px;top:462px;width:1px;height:2px;background:#1a1a3a;"></div>
<div style="left:1200px;top:462px;width:3px;height:2px;background:#c4c4c4;"></div>
<div style="left:1201px;top:462px;width:1px;height:2px;background:#1a1a3a;"></div>
<div style="left:1204px;top:462px;width:3px;height:2px;background:#c4c4c4;"></div>
<div style="left:1205px;top:462px;width:1px;height:2px;background:#1a1a3a;"></div>
<div style="left:10px;top:471px;width:45px;height:20px;background:#eaeaea;border:1px solid #c7c7c7;border-radius:2px;"></div>
<svg style="left:56px;top:474px" width="16" height="16" viewBox="0 0 16 16"><circle cx="6.5" cy="6.5" r="5.2" stroke="#3b82e6" stroke-width="1.1" fill="none"/><path d="M10.2 10.2 L14.2 14.2" stroke="#3b82e6" stroke-width="1.2"/></svg>
<svg style="left:76px;top:480px" width="11" height="6" viewBox="0 0 11 6"><path d="M0.5 0.5 H10 L5.25 5.5 Z" fill="#1a66db"/></svg>
<div style="left:91px;top:471px;width:423px;height:20px;background:#eaeaea;border:1px solid #c7c7c7;border-radius:2px;"></div>
<div style="left:514px;top:471px;width:45px;height:20px;background:#eaeaea;border:1px solid #c7c7c7;border-radius:2px;"></div>
<div style="left:559px;top:471px;width:45px;height:20px;background:#eaeaea;border:1px solid #c7c7c7;border-radius:2px;"></div>
<div style="left:604px;top:471px;width:72px;height:20px;background:#ffffff;border:1px solid #c7c7c7;border-radius:2px;"></div>
<div style="left:676px;top:471px;width:45px;height:20px;background:#eaeaea;border:1px solid #c7c7c7;border-radius:2px;"></div>
<div style="left:721px;top:471px;width:72px;height:20px;background:#eaeaea;border:1px solid #c7c7c7;border-radius:2px;"></div>
<div style="left:793px;top:471px;width:72px;height:20px;background:#eaeaea;border:1px solid #c7c7c7;border-radius:2px;"></div>
<div style="left:865px;top:471px;width:81px;height:20px;background:#eaeaea;border:1px solid #c7c7c7;border-radius:2px;"></div>
<div style="left:946px;top:471px;width:81px;height:20px;background:#ffffff;border:1px solid #c7c7c7;border-radius:2px;"></div>
<div style="left:1027px;top:471px;width:90px;height:20px;background:#ffffff;border:1px solid #c7c7c7;border-radius:2px;"></div>
<div style="left:1117px;top:471px;width:72px;height:20px;background:#ffffff;border:1px solid #c7c7c7;border-radius:2px;"></div>
<div style="left:1189px;top:471px;width:26px;height:20px;background:#ffffff;border:1px solid #c7c7c7;border-radius:2px;"></div>
<div style="left:517px;top:477.0px;font-size:11px;line-height:11px;color:#141414;transform:scaleX(0.92);transform-origin:0 0;">Sim</div>
<div style="left:562px;top:477.0px;font-size:11px;line-height:11px;color:#141414;transform:scaleX(0.92);transform-origin:0 0;">Sim</div>
<div style="left:1196px;top:484px;width:3px;height:2px;background:#c4c4c4;"></div>
<div style="left:1197px;top:484px;width:1px;height:2px;background:#1a1a3a;"></div>
<div style="left:1200px;top:484px;width:3px;height:2px;background:#c4c4c4;"></div>
<div style="left:1201px;top:484px;width:1px;height:2px;background:#1a1a3a;"></div>
<div style="left:1204px;top:484px;width:3px;height:2px;background:#c4c4c4;"></div>
<div style="left:1205px;top:484px;width:1px;height:2px;background:#1a1a3a;"></div>
<svg style="left:1217px;top:319px" width="17" height="12" viewBox="0 0 17 12"><path d="M3.5 8.5 L8.5 3.5 L13.5 8.5" stroke="#555" stroke-width="1" fill="none"/></svg>
<div style="left:1216px;top:332px;width:18px;height:10px;background:#e6e6e6;border-radius:4px;"></div>
<svg style="left:1217px;top:479px" width="17" height="12" viewBox="0 0 17 12"><path d="M3.5 3.5 L8.5 8.5 L13.5 3.5" stroke="#555" stroke-width="1" fill="none"/></svg>
<div style="left:1px;top:504px;width:1242px;height:1px;background:#e3e3e3;"></div>
<div style="left:10px;top:515px;width:106px;height:20px;background:#ffffff;border:1px solid #c9c9c9;border-radius:3px;"></div>
<svg style="left:14px;top:517px;overflow:visible" width="17" height="18" viewBox="0 0 17 18"><path d="M1.2 6.6 A7.3 7.3 0 0 1 14.7 5.8 M14.7 1.9 V5.8 H10.8 M14.7 9.6 A7.5 7.5 0 0 1 1.4 10.3 M1.4 14.2 V10.3 H5.3" stroke="#2a78e4" stroke-width="1.15" fill="none"/></svg>
<div style="left:31px;top:521.0px;font-size:11px;line-height:11px;color:#141414;">F5-Atu.Pr.Venda</div>
<div style="left:118px;top:515px;width:106px;height:20px;background:#ffffff;border:1px solid #c9c9c9;border-radius:3px;"></div>
<svg style="left:122px;top:517px;overflow:visible" width="17" height="18" viewBox="0 0 17 18"><path d="M1.2 6.6 A7.3 7.3 0 0 1 14.7 5.8 M14.7 1.9 V5.8 H10.8 M14.7 9.6 A7.5 7.5 0 0 1 1.4 10.3 M1.4 14.2 V10.3 H5.3" stroke="#2a78e4" stroke-width="1.15" fill="none"/></svg>
<div style="left:140px;top:521.0px;font-size:11px;line-height:11px;color:#141414;">F7-Atu.Cst.Base</div>
<div style="left:226px;top:515px;width:106px;height:20px;background:#ffffff;border:1px solid #c9c9c9;border-radius:3px;"></div>
<svg style="left:234px;top:517px" width="18" height="16" viewBox="0 0 18 16"><path d="M11 1.3 L17 6.2 L11 11.4 V8.4 H7 C5 8.4 3.5 10.5 4.1 14.2 C1.5 12.5 1 10 2 7.5 C3 5.5 5 4.5 7.5 4.5 H11 Z" stroke="#2a78e4" stroke-width="1.05" fill="none" stroke-linejoin="round"/></svg>
<div style="left:253.5px;top:521.0px;font-size:11px;line-height:11px;color:#141414;">F10-Transferir</div>
<div style="left:1036px;top:515px;width:97px;height:42px;background:#ffffff;border:1px solid #c9c9c9;border-radius:3px;"></div>
<svg style="left:1053px;top:528px" width="10" height="16" viewBox="0 0 10 16"><path d="M7.8 2.1 L2.2 8 L7.8 13.5" stroke="#2a78e4" stroke-width="1.1" fill="none"/></svg>
<div style="left:894.5px;width:400px;text-align:center;top:524.0px;font-size:11px;line-height:11px;color:#141414;"><u>V</u>oltar</div>
<div style="left:893px;width:400px;text-align:center;top:537.5px;font-size:11px;line-height:11px;color:#141414;">(page up)</div>
<div style="left:1135px;top:515px;width:97px;height:42px;background:#1a66db;border:1px solid #cdc8c2;border-radius:2px;"></div>
<div style="left:974px;width:400px;text-align:center;top:524.0px;font-size:11px;line-height:11px;color:#fff;"><u>A</u>vançar</div>
<div style="left:973px;width:400px;text-align:center;top:537.5px;font-size:11px;line-height:11px;color:#fff;">(page down)</div>
<svg style="left:1211px;top:528px" width="10" height="16" viewBox="0 0 10 16"><path d="M2.5 2.1 L8.1 8 L2.5 13.5" stroke="#ffffff" stroke-width="1.1" fill="none"/></svg>
</body></html>
